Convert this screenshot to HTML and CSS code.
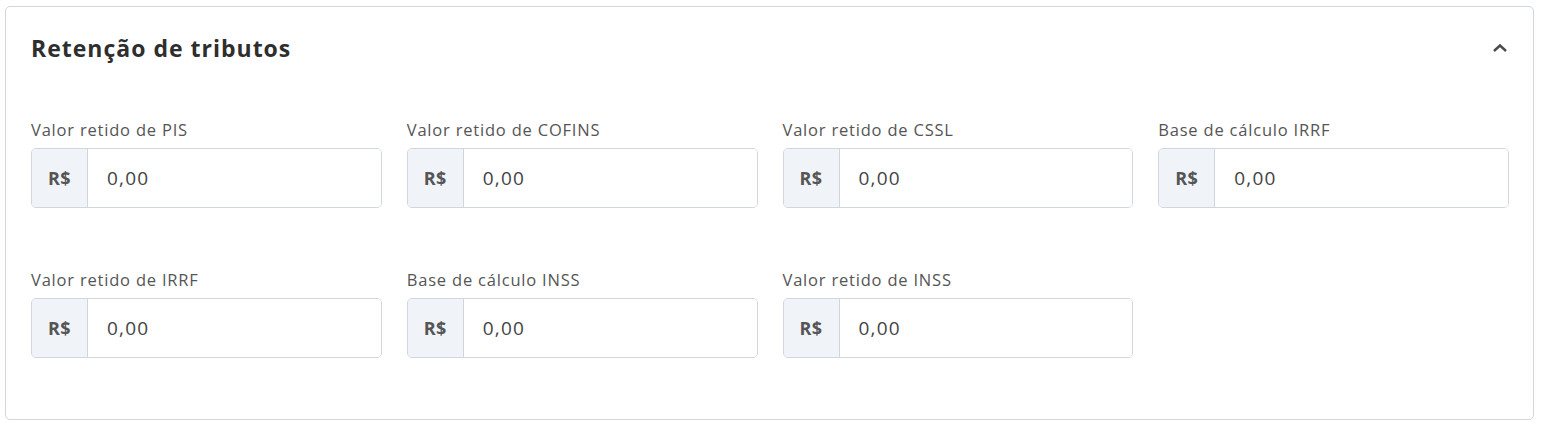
FILE: index.html
```html
<!DOCTYPE html>
<html>
	<head>
		<title>Retenção de tributos</title>
		<link rel="stylesheet" href="styles.css">
	</head>
	<body>
		<div class="card">
			<div class="card-header">
				<h2>Retenção de tributos</h2>
				<svg class="chevron" width="16" height="10" viewBox="0 0 16 10"><path d="M2 8 L8 2.5 L14 8" fill="none" stroke="#4a4a4a" stroke-width="2.4"/></svg>
			</div>
			<div class="fields">
				<div class="field">
					<label>Valor retido de PIS</label>
					<div class="money"><span class="prefix">R$</span><input type="text" value="0,00"></div>
				</div>
				<div class="field">
					<label>Valor retido de COFINS</label>
					<div class="money"><span class="prefix">R$</span><input type="text" value="0,00"></div>
				</div>
				<div class="field">
					<label>Valor retido de CSSL</label>
					<div class="money"><span class="prefix">R$</span><input type="text" value="0,00"></div>
				</div>
				<div class="field">
					<label>Base de cálculo IRRF</label>
					<div class="money"><span class="prefix">R$</span><input type="text" value="0,00"></div>
				</div>
				<div class="field">
					<label>Valor retido de IRRF</label>
					<div class="money"><span class="prefix">R$</span><input type="text" value="0,00"></div>
				</div>
				<div class="field">
					<label>Base de cálculo INSS</label>
					<div class="money"><span class="prefix">R$</span><input type="text" value="0,00"></div>
				</div>
				<div class="field">
					<label>Valor retido de INSS</label>
					<div class="money"><span class="prefix">R$</span><input type="text" value="0,00"></div>
				</div>
			</div>
		</div>
	</body>
</html>
```

FILE: styles.css
```css
body {
	font-family: "Open Sans", Arial, sans-serif;
	margin: 0;
	background: #fff;
}
.card {
	margin: 6px 8px 0 5px;
	height: 414px;
	box-sizing: border-box;
	border: 1px solid #cfd6de;
	border-radius: 5px;
	padding: 26px 24px 0 25px;
}
.card-header {
	display: flex;
	justify-content: space-between;
	align-items: center;
	height: 30px;
}
.card-header h2 {
	margin: 0;
	font-size: 23px;
	font-weight: 700;
	letter-spacing: 1px;
	color: #2e2e2e;
}
.chevron {
	margin-right: 1px;
}
.fields {
	display: grid;
	grid-template-columns: repeat(4, 1fr);
	column-gap: 25px;
	row-gap: 62px;
	margin-top: 57px;
}
.field label {
	display: block;
	height: 20px;
	line-height: 20px;
	font-size: 16.5px;
	letter-spacing: 0.8px;
	color: #555;
	margin-bottom: 8px;
}
.money {
	display: flex;
	height: 60px;
	box-sizing: border-box;
	border: 1px solid #cfd6de;
	border-radius: 5px;
	overflow: hidden;
}
.prefix {
	width: 55px;
	display: flex;
	align-items: center;
	justify-content: center;
	background: #f0f3f8;
	border-right: 1px solid #cfd6de;
	font-weight: 700;
	font-size: 18px;
	letter-spacing: 0.5px;
	color: #555;
}
.money input {
	flex: 1;
	min-width: 0;
	border: none;
	outline: none;
	padding: 0 19px;
	font-family: inherit;
	font-size: 19px;
	letter-spacing: 1.2px;
	color: #444;
}
```
